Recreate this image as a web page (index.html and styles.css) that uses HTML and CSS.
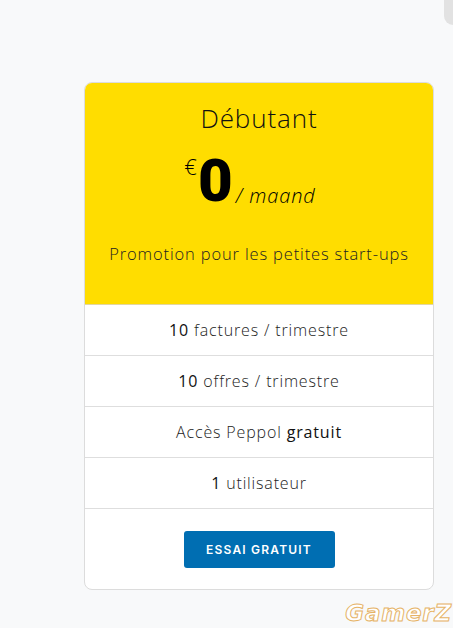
FILE: index.html
```html
<!DOCTYPE html>
<html lang="fr">
<head>
<meta charset="utf-8">
<title>Débutant</title>
<link rel="stylesheet" href="styles.css">
</head>
<body>
<div class="corner"></div>
<main class="page">
  <section class="card">
    <header class="card-head">
      <h2 class="plan">Débutant</h2>
      <div class="price">
        <span class="cur">€</span><span class="amount">0</span><span class="per">/ maand</span>
      </div>
      <p class="desc">Promotion pour les petites start-ups</p>
    </header>
    <ul class="features">
      <li><b>10</b> factures / trimestre</li>
      <li><b>10</b> offres / trimestre</li>
      <li>Accès Peppol <b>gratuit</b></li>
      <li><b>1</b> utilisateur</li>
    </ul>
    <div class="card-foot">
      <a class="btn" href="#">ESSAI GRATUIT</a>
    </div>
  </section>
</main>
<div class="watermark">GamerZ</div>
</body>
</html>
```
FILE: styles.css
```css
html, body {
  margin: 0;
  padding: 0;
}
body {
  background: #f8f9fa;
  font-family: "Open Sans", "Noto Sans", sans-serif;
  color: #212529;
  width: 453px;
  height: 628px;
  overflow: hidden;
  position: relative;
}
.corner {
  position: absolute;
  top: 0;
  right: 0;
  width: 9px;
  height: 25px;
  background: #e2e2e2;
  border-bottom-left-radius: 10px;
}
.page {
  padding: 82px 0 0 84px;
}
.card {
  width: 348px;
  height: 506px;
  border: 1px solid #dcdcdc;
  border-radius: 8px;
  background: #fff;
  overflow: hidden;
  display: flex;
  flex-direction: column;
}
.card-head {
  background: #ffdd00;
  height: 222px;
  display: flex;
  flex-direction: column;
  align-items: center;
  border-bottom: 1px solid #e2d6a0;
  box-sizing: border-box;
}
.plan {
  margin: 18px 0 0;
  font-size: 26px;
  font-weight: 300;
  color: #111;
  line-height: 34px;
  letter-spacing: 0.9px;
}
.price {
  display: flex;
  align-items: flex-start;
  margin-top: 18px;
  margin-right: 18px;
  color: #000;
}
.cur {
  font-size: 22px;
  font-weight: 300;
  line-height: 22px;
  margin-top: 2px;
  margin-right: 1px;
}
.amount {
  font-family: Roboto, "Liberation Sans", sans-serif;
  font-size: 60px;
  font-weight: 900;
  line-height: 56px;
}
.per {
  font-size: 20px;
  font-style: italic;
  font-weight: 300;
  align-self: flex-end;
  margin-left: 3px;
  margin-bottom: 0px;
  letter-spacing: 0.9px;
}
.desc {
  margin: 33px 0 0;
  font-size: 16.5px;
  font-weight: 300;
  color: #222;
  letter-spacing: 0.85px;
}
.features {
  list-style: none;
  margin: 0;
  padding: 0;
}
.features li {
  height: 51px;
  line-height: 50px;
  border-bottom: 1px solid #dedede;
  box-sizing: border-box;
  text-align: center;
  font-size: 16px;
  font-weight: 300;
  color: #222;
  letter-spacing: 0.85px;
}
.features b {
  font-weight: 400;
  color: #111;
}
.card-foot {
  flex: 1;
  display: flex;
  justify-content: center;
  padding-top: 22px;
}
.btn {
  display: flex;
  align-items: center;
  justify-content: center;
  width: 151px;
  height: 37px;
  background: #006eb2;
  color: #fff;
  border-radius: 3px;
  text-decoration: none;
  font-family: Inter, sans-serif;
  font-size: 12px;
  font-weight: 600;
  letter-spacing: 1.2px;
}
.watermark {
  position: absolute;
  right: 1px;
  bottom: 2px;
  font-family: "DejaVu Sans", sans-serif;
  font-style: italic;
  font-weight: 700;
  font-size: 23px;
  color: #fff;
  -webkit-text-stroke: 1px #e6b366;
  letter-spacing: 0.8px;
}
```
